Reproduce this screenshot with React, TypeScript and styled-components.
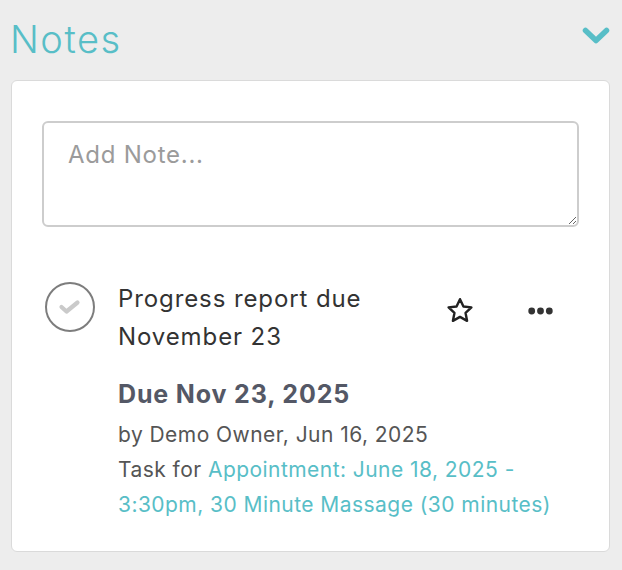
import React from "react";
import styled, { createGlobalStyle } from "styled-components";

const Global = createGlobalStyle`
  html, body { margin: 0; padding: 0; background: #ededed; }
  body { font-family: "Inter", "Open Sans", sans-serif; }
`;

const Page = styled.div`
  width: 622px;
  height: 570px;
  box-sizing: border-box;
  padding: 16px 11px 0 11px;
  background: #ededed;
`;

const Header = styled.div`
  display: flex;
  align-items: flex-start;
  justify-content: space-between;
  height: 46px;
  margin-bottom: 18px;
`;

const Title = styled.h2`
  margin: 0 0 0 -1px;
  font-family: "Inter", sans-serif;
  font-weight: 300;
  font-size: 38px;
  line-height: 46px;
  letter-spacing: 1.5px;
  color: #58bec7;
`;

const Chevron = styled.svg`
  width: 28px;
  height: 18px;
  margin-top: 11px;
  margin-right: 1px;
`;

const Card = styled.div`
  background: #fff;
  border: 1px solid #dadada;
  border-radius: 6px;
  box-sizing: border-box;
  width: 599px;
  height: 472px;
  padding: 40px 30px 0 30px;
`;

const NoteInput = styled.textarea`
  display: block;
  width: 537px;
  height: 106px;
  box-sizing: border-box;
  border: 2px solid #cdcdcd;
  border-radius: 6px;
  padding: 17px 24px;
  font-family: "Inter", sans-serif;
  font-size: 24px;
  letter-spacing: 0.75px;
  color: #333;
  resize: vertical;
  outline: none;
  &::placeholder { color: #9b9b9b; }
`;

const TaskRow = styled.div`
  display: flex;
  align-items: flex-start;
  gap: 23px;
  margin-top: 53px;
  padding-left: 3px;
`;

const CheckCircle = styled.div`
  flex: none;
  width: 50px;
  height: 50px;
  box-sizing: border-box;
  border: 2px solid #7d7d7d;
  border-radius: 50%;
  display: flex;
  align-items: center;
  justify-content: center;
  margin-top: 2px;
`;

const Content = styled.div`
  flex: 1;
  min-width: 0;
`;

const TitleRow = styled.div`
  display: flex;
  align-items: flex-start;
`;

const TaskTitle = styled.div`
  flex: 1;
  font-size: 24px;
  line-height: 38px;
  letter-spacing: 0.9px;
  color: #333;
  max-width: 290px;
`;

const Actions = styled.div`
  display: flex;
  align-items: center;
  gap: 53px;
  margin-left: auto;
  margin-right: 26px;
  margin-top: 16px;
`;

const Due = styled.div`
  font-weight: 700;
  font-size: 25px;
  line-height: 34px;
  letter-spacing: 0.85px;
  color: #545866;
  margin-top: 21px;
`;

const Meta = styled.div<{ $gap?: number }>`
  font-size: 21px;
  line-height: 35px;
  letter-spacing: 0.45px;
  color: #555;
  margin-top: ${(p) => p.$gap ?? 0}px;
`;

const Link = styled.a`
  color: #58bec7;
  text-decoration: none;
`;

const IconButton = styled.button`
  border: none;
  background: none;
  padding: 0;
  display: flex;
  align-items: center;
  justify-content: center;
  cursor: pointer;
`;

export default function App() {
  return (
    <>
      <Global />
      <Page>
        <Header>
          <Title>Notes</Title>
          <Chevron viewBox="0 0 28 18">
            <path d="M3.5 3.5 L14 13.5 L24.5 3.5" fill="none" stroke="#58bec7" strokeWidth="5.5" strokeLinecap="round" strokeLinejoin="round" />
          </Chevron>
        </Header>
        <Card>
          <NoteInput placeholder="Add Note..." />
          <TaskRow>
            <CheckCircle>
              <svg width="24" height="16" viewBox="0 0 24 16">
                <path d="M3.5 8 L8.5 12.5 L19.5 3.5" fill="none" stroke="#cacaca" strokeWidth="4.2" strokeLinecap="round" strokeLinejoin="round" />
              </svg>
            </CheckCircle>
            <Content>
              <TitleRow>
                <TaskTitle>Progress report due November 23</TaskTitle>
                <Actions>
                  <IconButton aria-label="star">
                    <svg width="30" height="29" viewBox="0 0 24 24">
                      <path d="M12 2.6l2.85 6.05 6.6.8-4.85 4.55 1.25 6.55L12 17.3l-5.85 3.25 1.25-6.55L2.55 9.45l6.6-.8z" fill="none" stroke="#222" strokeWidth="2" strokeLinejoin="round" />
                    </svg>
                  </IconButton>
                  <IconButton aria-label="more">
                    <svg width="25" height="8" viewBox="0 0 25 8">
                      <circle cx="3.7" cy="4" r="3.4" fill="#333" />
                      <circle cx="12.5" cy="4" r="3.4" fill="#333" />
                      <circle cx="21.3" cy="4" r="3.4" fill="#333" />
                    </svg>
                  </IconButton>
                </Actions>
              </TitleRow>
              <Due>Due Nov 23, 2025</Due>
              <Meta $gap={6}>by Demo Owner, Jun 16, 2025</Meta>
              <Meta>
                Task for <Link href="#">Appointment: June 18, 2025 - 3:30pm, 30 Minute Massage (30 minutes)</Link>
              </Meta>
            </Content>
          </TaskRow>
        </Card>
      </Page>
    </>
  );
}
